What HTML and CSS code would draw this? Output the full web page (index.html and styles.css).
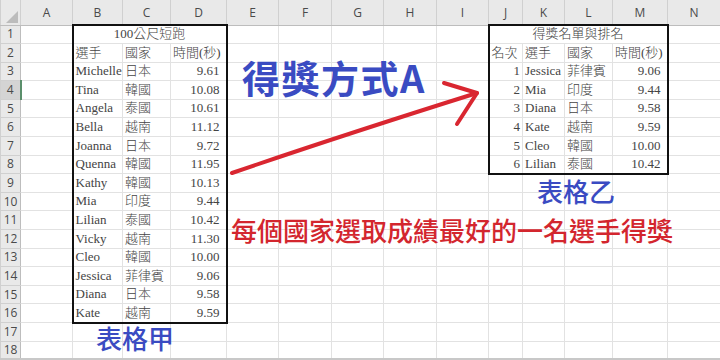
FILE: index.html
```html
<!DOCTYPE html>
<html lang="zh-Hant">
<head>
<meta charset="utf-8">
<title>得獎方式A</title>
<link rel="stylesheet" href="styles.css">
</head>
<body>
<div class="sheet">
<table class="grid">
<colgroup>
<col class="w-rh"><col class="w-a"><col class="w-b"><col class="w-c"><col class="w-d"><col class="w-e"><col class="w-f"><col class="w-g"><col class="w-h"><col class="w-i"><col class="w-j"><col class="w-k"><col class="w-l"><col class="w-m"><col class="w-n">
</colgroup>
<thead>
<tr class="hdr">
<th class="corner"><span class="tri"></span></th><th>A</th><th>B</th><th>C</th><th>D</th><th>E</th><th>F</th><th>G</th><th>H</th><th>I</th><th>J</th><th>K</th><th>L</th><th>M</th><th>N</th>
</tr>
</thead>
<tbody>
<tr><th>1</th><td></td><td colspan="3" class="ctr tt tl tr">100公尺短跑</td><td></td><td></td><td></td><td></td><td></td><td colspan="4" class="ctr tt tl tr">得獎名單與排名</td><td></td></tr>
<tr><th>2</th><td></td><td class="tl">選手</td><td>國家</td><td class="tr">時間(秒)</td><td></td><td></td><td></td><td></td><td></td><td class="tl">名次</td><td>選手</td><td>國家</td><td class="tr">時間(秒)</td><td></td></tr>
<tr><th>3</th><td></td><td class="tl">Michelle</td><td>日本</td><td class="tr num">9.61</td><td></td><td></td><td></td><td></td><td></td><td class="tl rk">1</td><td>Jessica</td><td>菲律賓</td><td class="tr num">9.06</td><td></td></tr>
<tr class="act"><th>4</th><td></td><td class="tl">Tina</td><td>韓國</td><td class="tr num">10.08</td><td></td><td></td><td></td><td></td><td></td><td class="tl rk">2</td><td>Mia</td><td>印度</td><td class="tr num">9.44</td><td></td></tr>
<tr><th>5</th><td></td><td class="tl">Angela</td><td>泰國</td><td class="tr num">10.61</td><td></td><td></td><td></td><td></td><td></td><td class="tl rk">3</td><td>Diana</td><td>日本</td><td class="tr num">9.58</td><td></td></tr>
<tr><th>6</th><td></td><td class="tl">Bella</td><td>越南</td><td class="tr num">11.12</td><td></td><td></td><td></td><td></td><td></td><td class="tl rk">4</td><td>Kate</td><td>越南</td><td class="tr num">9.59</td><td></td></tr>
<tr><th>7</th><td></td><td class="tl">Joanna</td><td>日本</td><td class="tr num">9.72</td><td></td><td></td><td></td><td></td><td></td><td class="tl rk">5</td><td>Cleo</td><td>韓國</td><td class="tr num">10.00</td><td></td></tr>
<tr><th>8</th><td></td><td class="tl">Quenna</td><td>韓國</td><td class="tr num">11.95</td><td></td><td></td><td></td><td></td><td></td><td class="tl tb rk">6</td><td class="tb">Lilian</td><td class="tb">泰國</td><td class="tr tb num">10.42</td><td></td></tr>
<tr><th>9</th><td></td><td class="tl">Kathy</td><td>韓國</td><td class="tr num">10.13</td><td></td><td></td><td></td><td></td><td></td><td></td><td></td><td></td><td></td><td></td></tr>
<tr><th>10</th><td></td><td class="tl">Mia</td><td>印度</td><td class="tr num">9.44</td><td></td><td></td><td></td><td></td><td></td><td></td><td></td><td></td><td></td><td></td></tr>
<tr><th>11</th><td></td><td class="tl">Lilian</td><td>泰國</td><td class="tr num">10.42</td><td></td><td></td><td></td><td></td><td></td><td></td><td></td><td></td><td></td><td></td></tr>
<tr><th>12</th><td></td><td class="tl">Vicky</td><td>越南</td><td class="tr num">11.30</td><td></td><td></td><td></td><td></td><td></td><td></td><td></td><td></td><td></td><td></td></tr>
<tr><th>13</th><td></td><td class="tl">Cleo</td><td>韓國</td><td class="tr num">10.00</td><td></td><td></td><td></td><td></td><td></td><td></td><td></td><td></td><td></td><td></td></tr>
<tr><th>14</th><td></td><td class="tl">Jessica</td><td>菲律賓</td><td class="tr num">9.06</td><td></td><td></td><td></td><td></td><td></td><td></td><td></td><td></td><td></td><td></td></tr>
<tr><th>15</th><td></td><td class="tl">Diana</td><td>日本</td><td class="tr num">9.58</td><td></td><td></td><td></td><td></td><td></td><td></td><td></td><td></td><td></td><td></td></tr>
<tr><th>16</th><td></td><td class="tl tb">Kate</td><td class="tb">越南</td><td class="tr tb num">9.59</td><td></td><td></td><td></td><td></td><td></td><td></td><td></td><td></td><td></td><td></td></tr>
<tr><th>17</th><td></td><td></td><td></td><td></td><td></td><td></td><td></td><td></td><td></td><td></td><td></td><td></td><td></td><td></td></tr>
<tr><th>18</th><td></td><td></td><td></td><td></td><td></td><td></td><td></td><td></td><td></td><td></td><td></td><td></td><td></td><td></td></tr>
</tbody>
</table>

<div class="label title-a">得獎方式A</div>
<div class="label cap cap-1">表格甲</div>
<div class="label cap cap-2">表格乙</div>
<div class="label rule">每個國家選取成績最好的一名選手得獎</div>

<svg class="arrow" width="720" height="360" viewBox="0 0 720 360">
<path d="M232 173 Q 340 136 477 93" fill="none" stroke="#d92630" stroke-width="4" stroke-linecap="round"/>
<path d="M444 83 L477 93 L457 124" fill="none" stroke="#d92630" stroke-width="4" stroke-linecap="round" stroke-linejoin="round"/>
</svg>

<div class="tabs"></div>
</div>
</body>
</html>
```

FILE: styles.css
```css
html, body {
  margin: 0;
  padding: 0;
  background: #ffffff;
}

.sheet {
  position: relative;
  width: 720px;
  height: 360px;
  overflow: hidden;
  background: #ffffff;
}

.grid {
  border-collapse: collapse;
  table-layout: fixed;
  width: 720px;
  font-family: "Liberation Serif", "Noto Sans CJK TC", serif;
  font-size: 13px;
  font-weight: 300;
  color: #444444;
}

.w-rh { width: 20px; }
.w-a { width: 52px; }
.w-b { width: 50px; }
.w-c { width: 48px; }
.w-d { width: 56px; }
.w-e { width: 52px; }
.w-f { width: 53px; }
.w-g { width: 52px; }
.w-h { width: 53px; }
.w-i { width: 52px; }
.w-j { width: 34px; }
.w-k { width: 42px; }
.w-l { width: 48px; }
.w-m { width: 55px; }
.w-n { width: 53px; }

.grid td {
  height: 18.6px;
  padding: 0 2px 1px 2px;
  border: 1px solid #e2e2e2;
  white-space: nowrap;
  overflow: hidden;
  vertical-align: bottom;
  line-height: 16px;
  box-sizing: border-box;
}

.grid tbody th {
  height: 18.6px;
  padding: 0;
  background: #e9e9e9;
  border: 1px solid #d0d0d0;
  border-right-color: #bdbdbd;
  font-family: "Open Sans", "Noto Sans", sans-serif;
  font-weight: 400;
  font-size: 12px;
  color: #4a4a4a;
  text-align: center;
  line-height: 16px;
  box-sizing: border-box;
}

.grid .act th {
  background: #d4d4d4;
  border-right: 2px solid #5a8f6b;
}

.hdr th {
  height: 25px;
  padding: 0;
  background: #e9e9e9;
  border: 1px solid #d0d0d0;
  border-bottom-color: #bdbdbd;
  font-family: "Open Sans", "Noto Sans", sans-serif;
  font-weight: 400;
  font-size: 12px;
  color: #4a4a4a;
  text-align: center;
  box-sizing: border-box;
  border-top: none;
}

.hdr .corner {
  position: relative;
}

.tri {
  position: absolute;
  right: 2px;
  bottom: 2px;
  width: 0;
  height: 0;
  border-style: solid;
  border-width: 0 0 12px 12px;
  border-color: transparent transparent #bcbcbc transparent;
}

.ctr { text-align: center; }
.num { text-align: right; padding-right: 6px !important; }
.rk { text-align: right; }

.grid .tt { border-top: 2px solid #111111; }
.grid .tl { border-left: 2px solid #111111; }
.grid .tr { border-right: 2px solid #111111; }
.grid .tb { border-bottom: 2px solid #111111; }

.label {
  position: absolute;
  font-family: "Noto Sans CJK TC", "Noto Sans", sans-serif;
  font-weight: 700;
  line-height: 1;
  white-space: nowrap;
}

.title-a {
  left: 242px;
  top: 58px;
  font-size: 38px;
  letter-spacing: 1.5px;
  color: #3a4bc2;
}

.cap {
  font-size: 26px;
  color: #3a4bc2;
  font-weight: 500;
}

.cap-1 {
  left: 96px;
  top: 325px;
}

.cap-2 {
  left: 537px;
  top: 178px;
}

.rule {
  left: 231px;
  top: 217px;
  font-size: 26px;
  color: #d3262e;
  font-weight: 500;
}

.arrow {
  position: absolute;
  left: 0;
  top: 0;
  pointer-events: none;
}

.tabs {
  position: absolute;
  left: 0;
  right: 0;
  bottom: 0;
  height: 2px;
  background: #c8c8c8;
}
```
